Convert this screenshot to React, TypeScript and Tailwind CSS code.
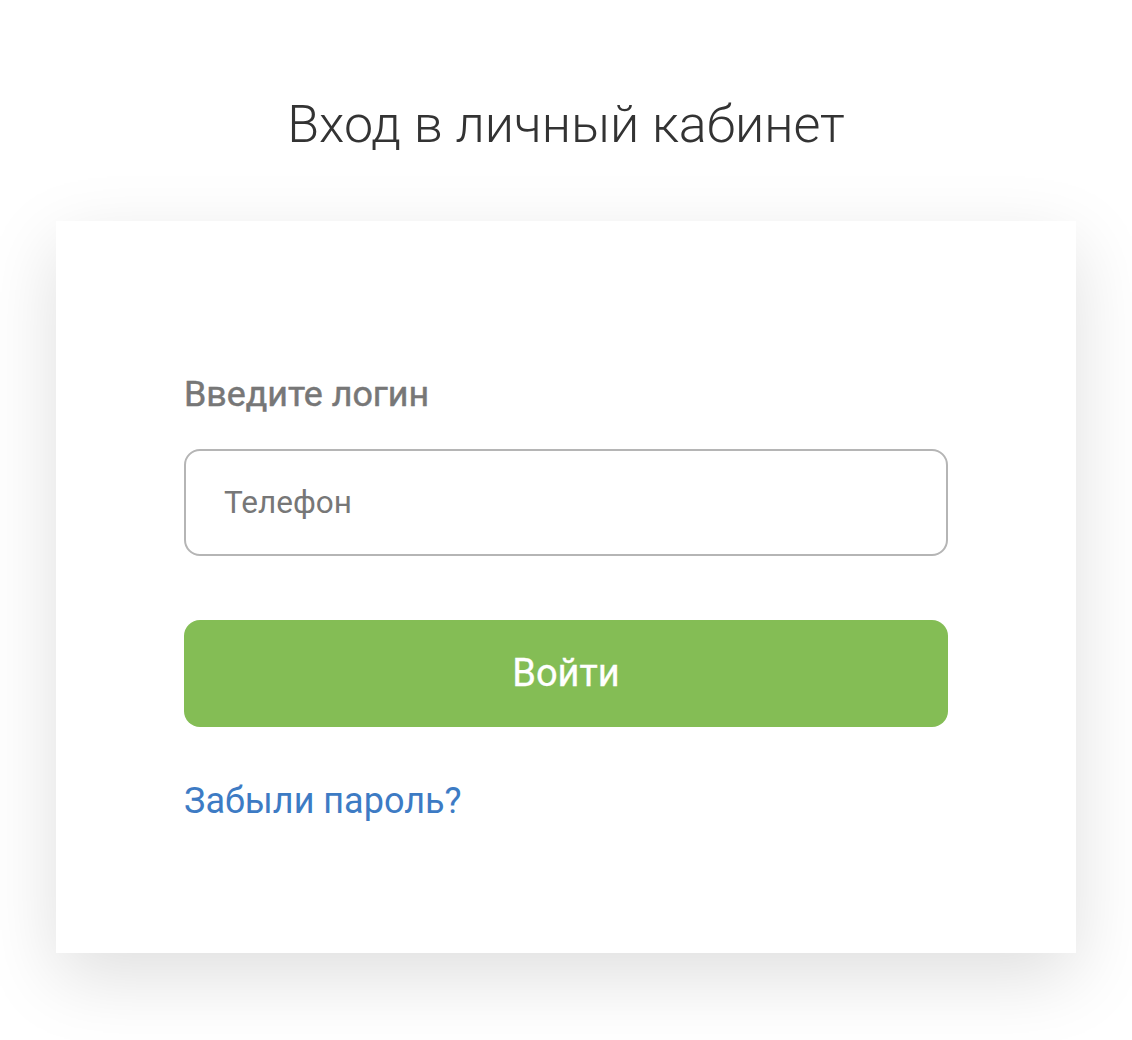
import React from 'react';

export default function App() {
  return (
    <div className="min-h-[1040px] bg-white flex flex-col items-center" style={{ fontFamily: 'Roboto, "Noto Sans", sans-serif' }}>
      {/* Title */}
      <h1 className="mt-[89px] text-[52px] leading-[72px] font-light text-[#333333]">Вход в личный кабинет</h1>

      {/* Card */}
      <div className="mt-[60px] w-[1020px] h-[732px] bg-white shadow-[0_24px_70px_rgba(0,0,0,0.13)] px-[128px] pt-[151px]">
        <label className="block text-[35.8px] leading-[44px] font-normal text-[#777777] [-webkit-text-stroke:0.5px_#777777]">Введите логин</label>
        <input
          type="text"
          placeholder="Телефон"
          className="mt-[33px] w-full h-[107px] rounded-[16px] border-2 border-[#b5b5b5] px-[38px] text-[31.5px] text-[#333] placeholder:text-[#777777] outline-none"
        />
        <button className="mt-[64px] w-full h-[107px] rounded-[16px] bg-[#84bd55] text-white text-[38px] font-normal [-webkit-text-stroke:0.3px_#ffffff]">
          Войти
        </button>
        <a href="#" className="block mt-[52px] text-[36px] leading-[44px] text-[#3d7bc4]">Забыли пароль?</a>
      </div>
    </div>
  );
}
